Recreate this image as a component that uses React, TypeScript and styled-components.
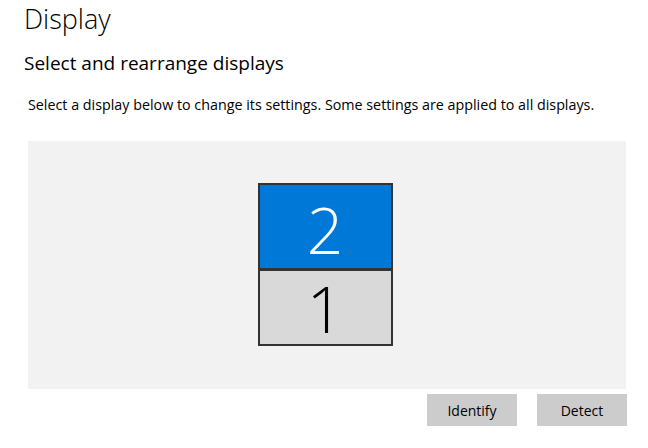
import React from "react";
import styled, { createGlobalStyle } from "styled-components";

const Global = createGlobalStyle`
  html, body { margin: 0; padding: 0; background: #ffffff; }
  body { font-family: "Open Sans", "Noto Sans", sans-serif; color: #000; }
`;

const Page = styled.div`
  width: 648px;
  height: 448px;
  overflow: hidden;
  box-sizing: border-box;
  padding: 2px 22px 0 24px;
  display: flex;
  flex-direction: column;
`;

const Title = styled.h1`
  margin: 0;
  font-size: 27px;
  font-weight: 300;
  line-height: 34px;
`;

const Subtitle = styled.h2`
  margin: 14px 0 0;
  font-size: 19px;
  font-weight: 400;
  line-height: 26px;
`;

const Description = styled.p`
  margin: 19px 0 0 4px;
  font-size: 14.3px;
  line-height: 20px;
`;

const Arrangement = styled.div`
  margin: 26px 0 0 4px;
  height: 248px;
  box-sizing: border-box;
  padding-top: 42px;
  background: #f2f2f2;
  display: flex;
  align-items: flex-start;
  justify-content: center;
`;

const Stack = styled.div`
  display: flex;
  flex-direction: column;
  width: 135px;
  margin-right: 4px;
`;

const Monitor = styled.div<{ $active?: boolean; $h: number }>`
  box-sizing: border-box;
  height: ${(p) => p.$h}px;
  border: 2px solid #333333;
  background: ${(p) => (p.$active ? "#0078d7" : "#d9d9d9")};
  color: ${(p) => (p.$active ? "#ffffff" : "#000000")};
  display: flex;
  align-items: center;
  justify-content: center;
  font-family: "Open Sans", sans-serif;
  font-weight: 300;
  font-size: 64px;
  line-height: 1;
  padding-top: ${(p) => (p.$active ? 6 : 2)}px;
  & + & { margin-top: -1px; }
`;

const Actions = styled.div`
  display: flex;
  justify-content: flex-end;
  gap: 20px;
  margin-top: 5px;
  margin-right: -1px;
`;

const Button = styled.button`
  width: 90px;
  height: 32px;
  border: none;
  background: #cccccc;
  font-family: "Open Sans", "Noto Sans", sans-serif;
  font-size: 14px;
  color: #000;
  padding: 0;
`;

export default function App() {
  return (
    <>
      <Global />
      <Page>
        <Title>Display</Title>
        <Subtitle>Select and rearrange displays</Subtitle>
        <Description>
          Select a display below to change its settings. Some settings are applied to all displays.
        </Description>
        <Arrangement>
          <Stack>
            <Monitor $active $h={87}>2</Monitor>
            <Monitor $h={77}>1</Monitor>
          </Stack>
        </Arrangement>
        <Actions>
          <Button>Identify</Button>
          <Button>Detect</Button>
        </Actions>
      </Page>
    </>
  );
}
